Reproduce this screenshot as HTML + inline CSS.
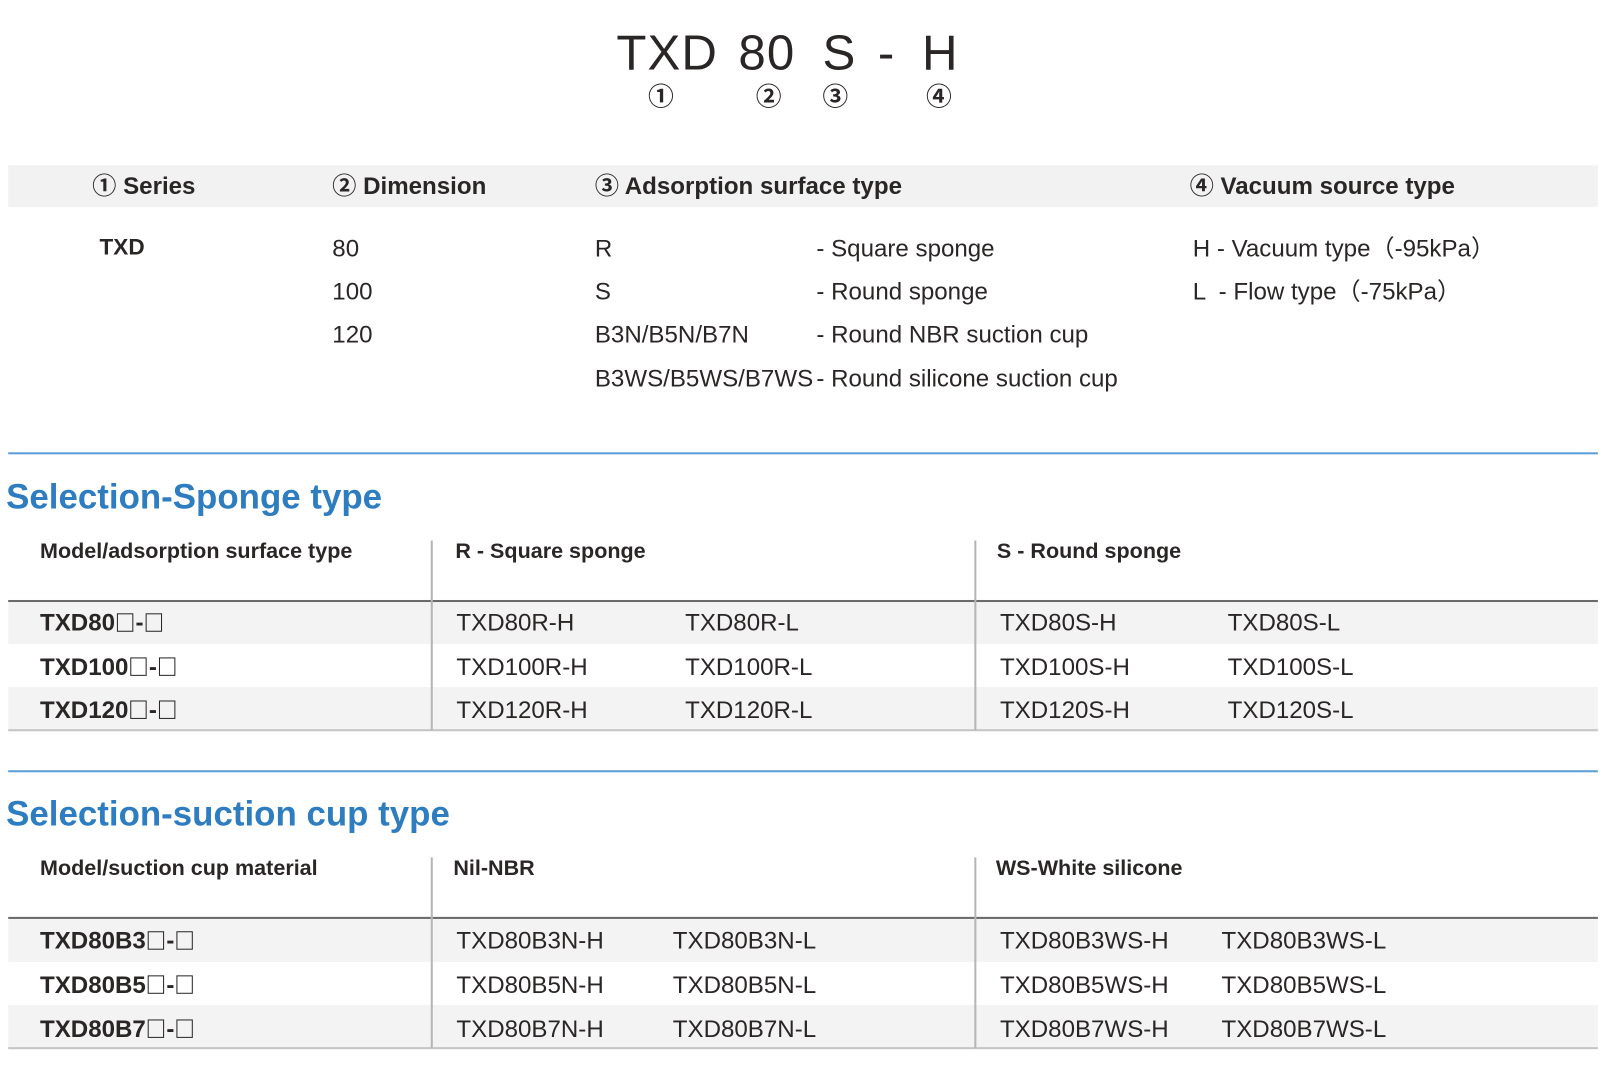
<!DOCTYPE html>
<html><head><meta charset="utf-8"><style>
body{margin:0;width:1604px;height:1078px;background:#fff;position:relative;overflow:hidden;font-family:"Liberation Sans","Noto Sans CJK SC",sans-serif;color:#2a2626}
#w{position:absolute;left:0;top:0;width:1564px;height:1052px;transform:scale(1.0256);transform-origin:0 0}
.a{position:absolute;white-space:nowrap;line-height:1.2}
.b{font-weight:bold}
.t{font-size:23.5px}
.big{font-size:48px;top:24px;letter-spacing:1px}
.c{font-size:25px;top:80px;font-weight:bold}
.bar{position:absolute;left:8px;width:1550px}
.h{font-size:34px;font-weight:bold;color:#2d7dc0}
.th{font-size:21px;font-weight:bold}
.v{position:absolute;width:2px;background:#b5b5b5}
.q{display:inline-block;width:14px;height:16px;border:1.6px solid #2a2626;vertical-align:-1px;margin:0 2px}
</style></head><body><div id="w">
<div class="a big" style="left:601px">TXD</div>
<div class="a big" style="left:720px">80</div>
<div class="a big" style="left:802px">S</div>
<div class="a big" style="left:856px">-</div>
<div class="a big" style="left:899px">H</div>
<div class="a c" style="left:632px">①</div>
<div class="a c" style="left:737px">②</div>
<div class="a c" style="left:802px">③</div>
<div class="a c" style="left:903px">④</div>

<div class="bar" style="top:161px;height:41px;background:#f2f2f2"></div>
<div class="a b t" style="left:90px;top:167px">① Series</div>
<div class="a b t" style="left:324px;top:167px">② Dimension</div>
<div class="a b t" style="left:580px;top:167px">③ Adsorption surface type</div>
<div class="a b t" style="left:1160px;top:167px">④ Vacuum source type</div>

<div class="a b t" style="left:97px;top:228px;font-size:22px">TXD</div>
<div class="a t" style="left:324px;top:228px">80</div>
<div class="a t" style="left:324px;top:270px">100</div>
<div class="a t" style="left:324px;top:312px">120</div>
<div class="a t" style="left:580px;top:228px">R</div>
<div class="a t" style="left:580px;top:270px">S</div>
<div class="a t" style="left:580px;top:312px">B3N/B5N/B7N</div>
<div class="a t" style="left:580px;top:355px">B3WS/B5WS/B7WS</div>
<div class="a t" style="left:796px;top:228px">- Square sponge</div>
<div class="a t" style="left:796px;top:270px">- Round sponge</div>
<div class="a t" style="left:796px;top:312px">- Round NBR suction cup</div>
<div class="a t" style="left:796px;top:355px">- Round silicone suction cup</div>
<div class="a t" style="left:1163px;top:228px">H - Vacuum type（-95kPa）</div>
<div class="a t" style="left:1163px;top:270px">L &nbsp;- Flow type（-75kPa）</div>

<div class="bar" style="top:441px;height:2px;background:#5b9fd8"></div>
<div class="a h" style="left:6px;top:465px">Selection-Sponge type</div>
<div class="a th" style="left:39px;top:525px">Model/adsorption surface type</div>
<div class="a th" style="left:444px;top:525px">R - Square sponge</div>
<div class="a th" style="left:972px;top:525px">S - Round sponge</div>
<div class="bar" style="top:586px;height:42px;background:#f3f3f3"></div>
<div class="bar" style="top:670px;height:42px;background:#f3f3f3"></div>
<div class="bar" style="top:585px;height:2px;background:#6a6a6a"></div>
<div class="bar" style="top:711px;height:2px;background:#c4c4c4"></div>
<div class="v" style="left:420px;top:527px;height:185px"></div>
<div class="v" style="left:950px;top:527px;height:185px"></div>
<div class="a b t" style="left:39px;top:593px">TXD80<span class="q"></span>-<span class="q"></span></div>
<div class="a b t" style="left:39px;top:636px">TXD100<span class="q"></span>-<span class="q"></span></div>
<div class="a b t" style="left:39px;top:678px">TXD120<span class="q"></span>-<span class="q"></span></div>
<div class="a t" style="left:445px;top:593px">TXD80R-H</div>
<div class="a t" style="left:668px;top:593px">TXD80R-L</div>
<div class="a t" style="left:975px;top:593px">TXD80S-H</div>
<div class="a t" style="left:1197px;top:593px">TXD80S-L</div>
<div class="a t" style="left:445px;top:636px">TXD100R-H</div>
<div class="a t" style="left:668px;top:636px">TXD100R-L</div>
<div class="a t" style="left:975px;top:636px">TXD100S-H</div>
<div class="a t" style="left:1197px;top:636px">TXD100S-L</div>
<div class="a t" style="left:445px;top:678px">TXD120R-H</div>
<div class="a t" style="left:668px;top:678px">TXD120R-L</div>
<div class="a t" style="left:975px;top:678px">TXD120S-H</div>
<div class="a t" style="left:1197px;top:678px">TXD120S-L</div>

<div class="bar" style="top:751px;height:2px;background:#5b9fd8"></div>
<div class="a h" style="left:6px;top:774px">Selection-suction cup type</div>
<div class="a th" style="left:39px;top:834px">Model/suction cup material</div>
<div class="a th" style="left:442px;top:834px">Nil-NBR</div>
<div class="a th" style="left:971px;top:834px">WS-White silicone</div>
<div class="bar" style="top:895px;height:43px;background:#f3f3f3"></div>
<div class="bar" style="top:980px;height:42px;background:#f3f3f3"></div>
<div class="bar" style="top:894px;height:2px;background:#6a6a6a"></div>
<div class="bar" style="top:1021px;height:2px;background:#c4c4c4"></div>
<div class="v" style="left:420px;top:836px;height:186px"></div>
<div class="v" style="left:950px;top:836px;height:186px"></div>
<div class="a b t" style="left:39px;top:903px">TXD80B3<span class="q"></span>-<span class="q"></span></div>
<div class="a b t" style="left:39px;top:946px">TXD80B5<span class="q"></span>-<span class="q"></span></div>
<div class="a b t" style="left:39px;top:989px">TXD80B7<span class="q"></span>-<span class="q"></span></div>
<div class="a t" style="left:445px;top:903px">TXD80B3N-H</div>
<div class="a t" style="left:656px;top:903px">TXD80B3N-L</div>
<div class="a t" style="left:975px;top:903px">TXD80B3WS-H</div>
<div class="a t" style="left:1191px;top:903px">TXD80B3WS-L</div>
<div class="a t" style="left:445px;top:946px">TXD80B5N-H</div>
<div class="a t" style="left:656px;top:946px">TXD80B5N-L</div>
<div class="a t" style="left:975px;top:946px">TXD80B5WS-H</div>
<div class="a t" style="left:1191px;top:946px">TXD80B5WS-L</div>
<div class="a t" style="left:445px;top:989px">TXD80B7N-H</div>
<div class="a t" style="left:656px;top:989px">TXD80B7N-L</div>
<div class="a t" style="left:975px;top:989px">TXD80B7WS-H</div>
<div class="a t" style="left:1191px;top:989px">TXD80B7WS-L</div>
</div></body></html>
